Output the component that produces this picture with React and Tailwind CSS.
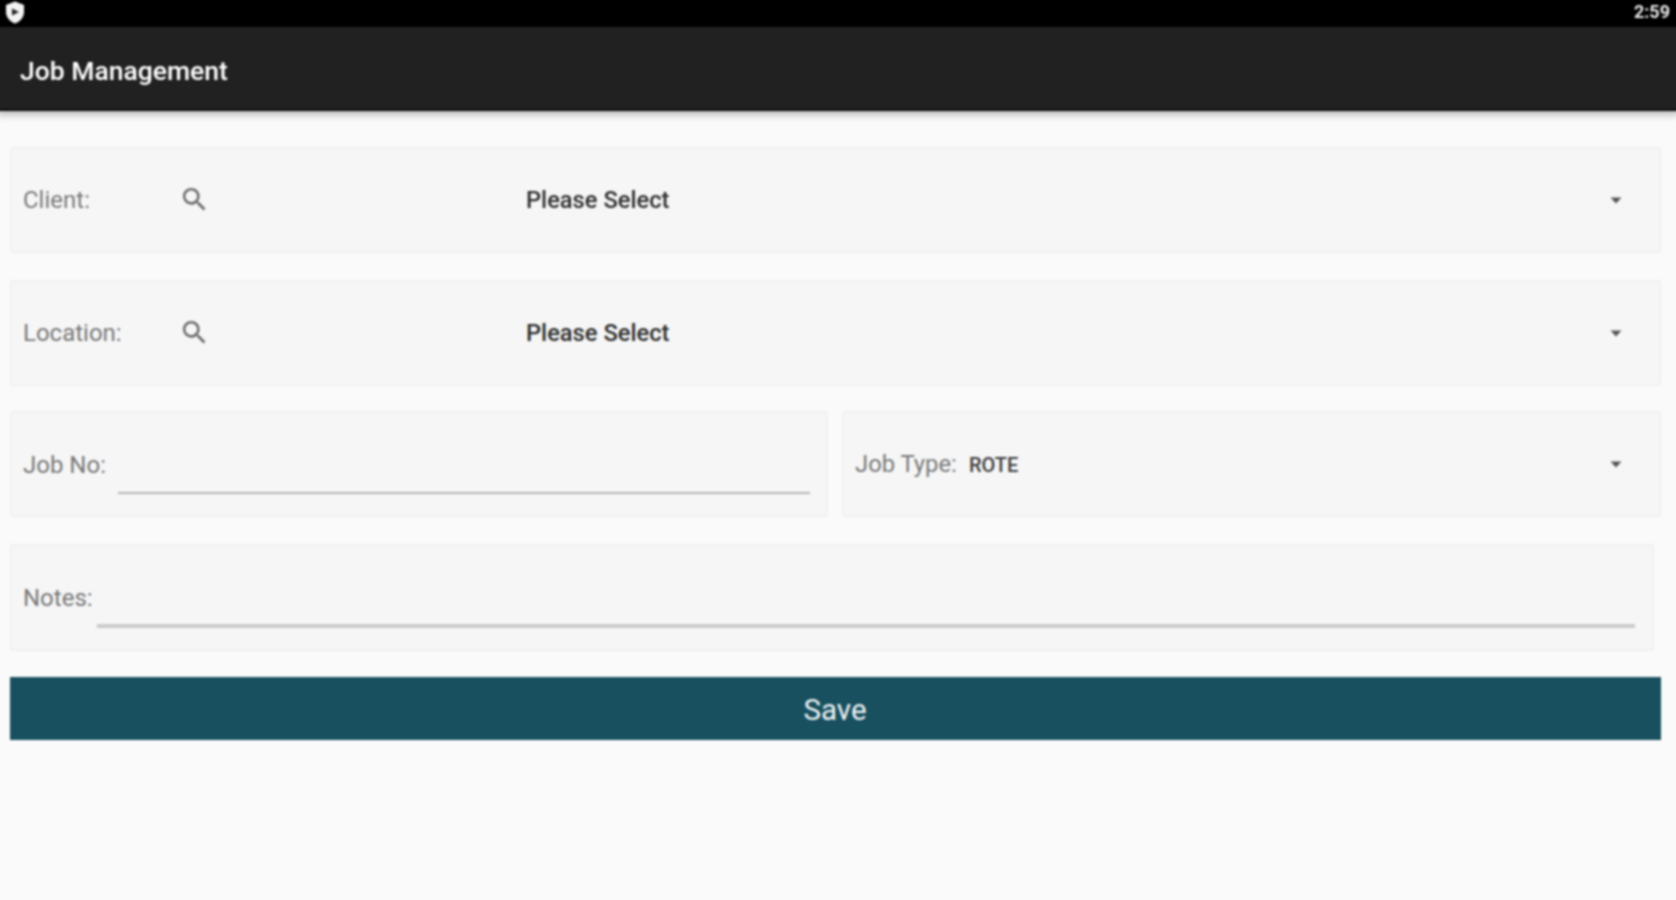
const font = { fontFamily: 'Roboto, "Liberation Sans", sans-serif' };

function Caret({ className = "" }) {
  return (
    <svg width="12" height="7" viewBox="0 0 12 7" className={className}>
      <path d="M0.5 0.5h11L6 6.5z" fill="#555555" />
    </svg>
  );
}

function Search() {
  return (
    <svg width="31" height="31" viewBox="0 0 24 24" fill="#6b6b6b" className="-mt-[2px]">
      <path d="M15.5 14h-.79l-.28-.27A6.471 6.471 0 0 0 16 9.5 6.5 6.5 0 1 0 9.5 16c1.61 0 3.09-.59 4.23-1.57l.27.28v.79l5 4.99L20.49 19l-4.99-5zm-6 0C7.01 14 5 11.99 5 9.5S7.01 5 9.5 5 14 7.01 14 9.5 11.99 14 9.5 14z" />
    </svg>
  );
}

function Card({ className = "", children }) {
  return (
    <div className={`flex items-center bg-[#f6f6f6] border-2 border-[#f1f1f1] rounded-[2px] ${className}`}>
      {children}
    </div>
  );
}

function SelectRow({ label }) {
  return (
    <Card className="h-[106px] mr-[15px] pl-[11px] pr-[37px]">
      <span className="w-[156px] text-[24px] text-[#787878]">{label}</span>
      <span className="w-[347px] flex items-center"><Search /></span>
      <span className="flex-1 text-[23.7px] font-medium text-[#2e2e2e] mt-[1px]">Please Select</span>
      <Caret />
    </Card>
  );
}

export default function App() {
  return (
    <div className="w-[1676px] h-[900px] overflow-hidden bg-[#fafafa]">
      <div style={font} className="w-[1684px] h-[908px] -ml-[4px] -mt-[4px] bg-[#fafafa] flex flex-col blur-[0.8px]">
        <div className="h-[31px] pt-[4px] bg-black flex items-center justify-between pl-[9px] pr-[10px]">
          <svg width="20" height="23" viewBox="0 0 20 23" className="-mt-[2px]">
            <path d="M10 0.5 L19 4 V11 C19 16.5 15 20.5 10 22.5 C5 20.5 1 16.5 1 11 V4z" fill="#f4f4f4" />
            <path d="M7 7.5 L14 11 L7 14.5z" fill="#222222" />
          </svg>
          <span className="text-[18px] font-bold text-[#e8e8e8] -mt-[4px]">2:59</span>
        </div>
        <div className="h-[84px] bg-[#212121] flex items-center pl-[24px] border-b-2 border-[#0a0a0a] shadow-[0_3px_8px_rgba(0,0,0,0.3)]">
          <span className="text-[26.5px] font-medium text-white mt-[5px]">Job Management</span>
        </div>
        <div className="flex flex-col pt-[36px] pl-[14px] pr-[4px]">
          <div className="flex flex-col gap-[27px]">
            <SelectRow label="Client:" />
            <SelectRow label="Location:" />
            <div className="flex gap-[14px] mr-[15px] -mt-[2px]">
              <Card className="w-[818px] h-[106px] pl-[11px] pr-[18px] relative">
                <span className="text-[24px] text-[#787878] mt-[2px]">Job No:</span>
                <div className="absolute left-[106px] right-[16px] bottom-[21px] h-[2px] bg-[#b5b5b5]" />
              </Card>
              <Card className="flex-1 h-[106px] pl-[11px] pr-[37px]">
                <span className="text-[23.8px] text-[#787878] mr-[12px] mt-[2px]">Job Type:</span>
                <span className="flex-1 text-[20px] font-medium text-[#3c3c3c] mt-[2px]">ROTE</span>
                <Caret className="mt-[1px]" />
              </Card>
            </div>
            <Card className="h-[107px] mr-[22px] pl-[11px] relative">
              <span className="text-[24px] text-[#787878]">Notes:</span>
              <div className="absolute left-[85px] right-[17px] bottom-[21px] h-[4px] bg-[#cbcbcb]" />
            </Card>
          </div>
          <button className="mt-[26px] mr-[15px] h-[63px] pt-[3px] bg-[#18505f] text-[#f0f4f5] text-[29.5px] text-center pr-[1px]">
            Save
          </button>
        </div>
      </div>
    </div>
  );
}
